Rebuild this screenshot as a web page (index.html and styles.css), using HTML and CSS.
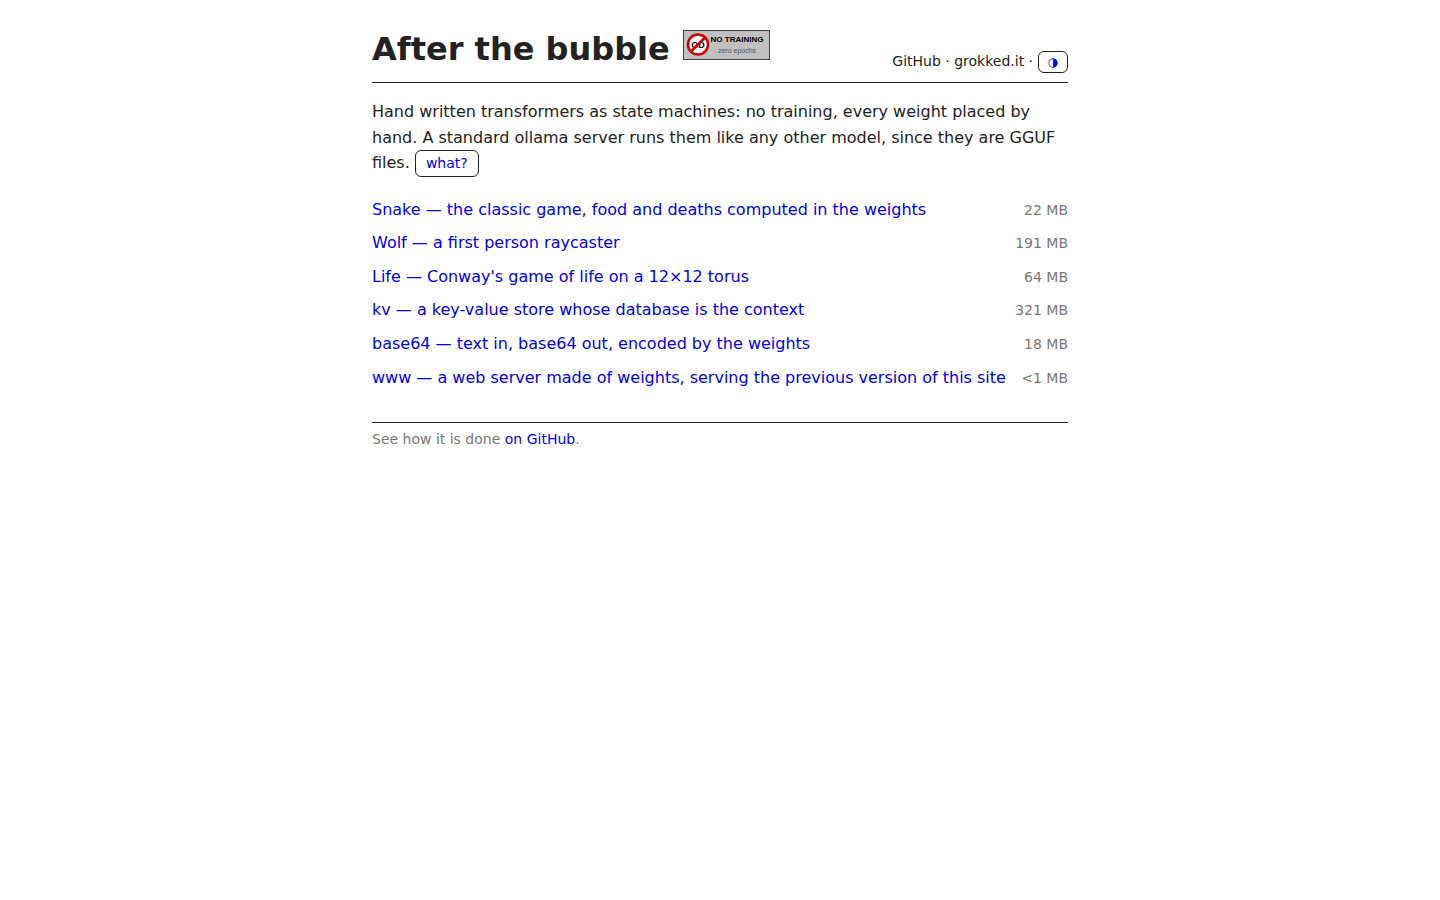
FILE: index.html
```html
<!DOCTYPE html>
<html lang="en">
<head>
<meta charset="utf-8">
<meta name="viewport" content="width=device-width, initial-scale=1">
<title>After the bubble</title>
<link rel="stylesheet" href="styles.css">
</head>
<body>
<header>
  <div class="title">
    <h1>After the bubble</h1>
    <svg class="badge" width="87" height="30" viewBox="0 0 87 30" role="img" aria-label="No training, zero epochs">
      <rect x="0.5" y="0.5" width="86" height="29" fill="#c0c0c0" stroke="#444"/>
      <circle cx="15" cy="14.5" r="10" fill="#fff"/>
      <text x="15" y="18" class="badge-mark">GD</text>
      <circle cx="15" cy="14.5" r="10" fill="none" stroke="#c00" stroke-width="2.5"/>
      <path d="M8 21.5L22 7.5" stroke="#c00" stroke-width="2.5"/>
      <text x="54" y="12" class="badge-main">NO TRAINING</text>
      <text x="54" y="23" class="badge-sub">zero epochs</text>
    </svg>
  </div>
  <nav>
    <a href="#">GitHub</a> · <a href="#">grokked.it</a> ·
    <button type="button" class="theme" aria-label="Toggle theme">◑</button>
  </nav>
</header>
<main>
  <p class="intro">Hand written transformers as state machines: no training, every weight placed by hand. A standard ollama server runs them like any other model, since they are GGUF files. <button type="button" class="what">what?</button></p>
  <ul class="demos">
    <li><a href="#">Snake — the classic game, food and deaths computed in the weights</a><span>22 MB</span></li>
    <li><a href="#">Wolf — a first person raycaster</a><span>191 MB</span></li>
    <li><a href="#">Life — Conway's game of life on a 12×12 torus</a><span>64 MB</span></li>
    <li><a href="#">kv — a key-value store whose database is the context</a><span>321 MB</span></li>
    <li><a href="#">base64 — text in, base64 out, encoded by the weights</a><span>18 MB</span></li>
    <li><a href="#">www — a web server made of weights, serving the previous version of this site</a><span>&lt;1 MB</span></li>
  </ul>
</main>
<footer>See how it is done <a href="#">on GitHub</a>.</footer>
</body>
</html>
```
FILE: styles.css
```css
* {
  box-sizing: border-box;
}

body {
  max-width: 728px;
  margin: 0 auto;
  padding: 24px 16px;
  font: 16px/1.6 "DejaVu Sans", sans-serif;
  color: #222;
  background: #fff;
}

a {
  color: #00e;
  text-decoration: none;
}

header {
  display: flex;
  justify-content: space-between;
  align-items: flex-end;
  padding-bottom: 8px;
  border-bottom: 1px solid #222;
}

.title {
  display: flex;
  gap: 13px;
}

h1 {
  margin: 0;
  font-size: 32px;
  line-height: 50px;
}

.badge {
  margin-top: 6px;
}

.badge text {
  font-family: "Liberation Sans", Arial, sans-serif;
  text-anchor: middle;
}

.badge-mark {
  font-size: 9px;
  font-weight: bold;
}

.badge-main {
  font-size: 8px;
  font-weight: bold;
}

.badge-sub {
  font-size: 7px;
  fill: #555;
}

nav,
footer {
  font-size: 14px;
}

nav {
  padding-bottom: 1px;
}

nav a {
  color: #222;
}

button {
  font: inherit;
  font-size: 14px;
  color: #00e;
  background: none;
  border: 1px solid #222;
  border-radius: 6px;
  cursor: pointer;
}

.theme {
  padding: 0 9px;
  font-size: 12px;
  line-height: 20px;
}

.what {
  padding: 1px 10px;
}

.intro {
  margin: 16px 0;
}

.demos {
  margin: 0;
  padding: 0;
  list-style: none;
}

.demos li {
  display: flex;
  justify-content: space-between;
  align-items: baseline;
  padding: 4px 0;
}

.demos span {
  font-size: 14px;
  color: #777;
}

footer {
  margin-top: 28px;
  padding-top: 5px;
  border-top: 1px solid #222;
  color: #777;
}
```
